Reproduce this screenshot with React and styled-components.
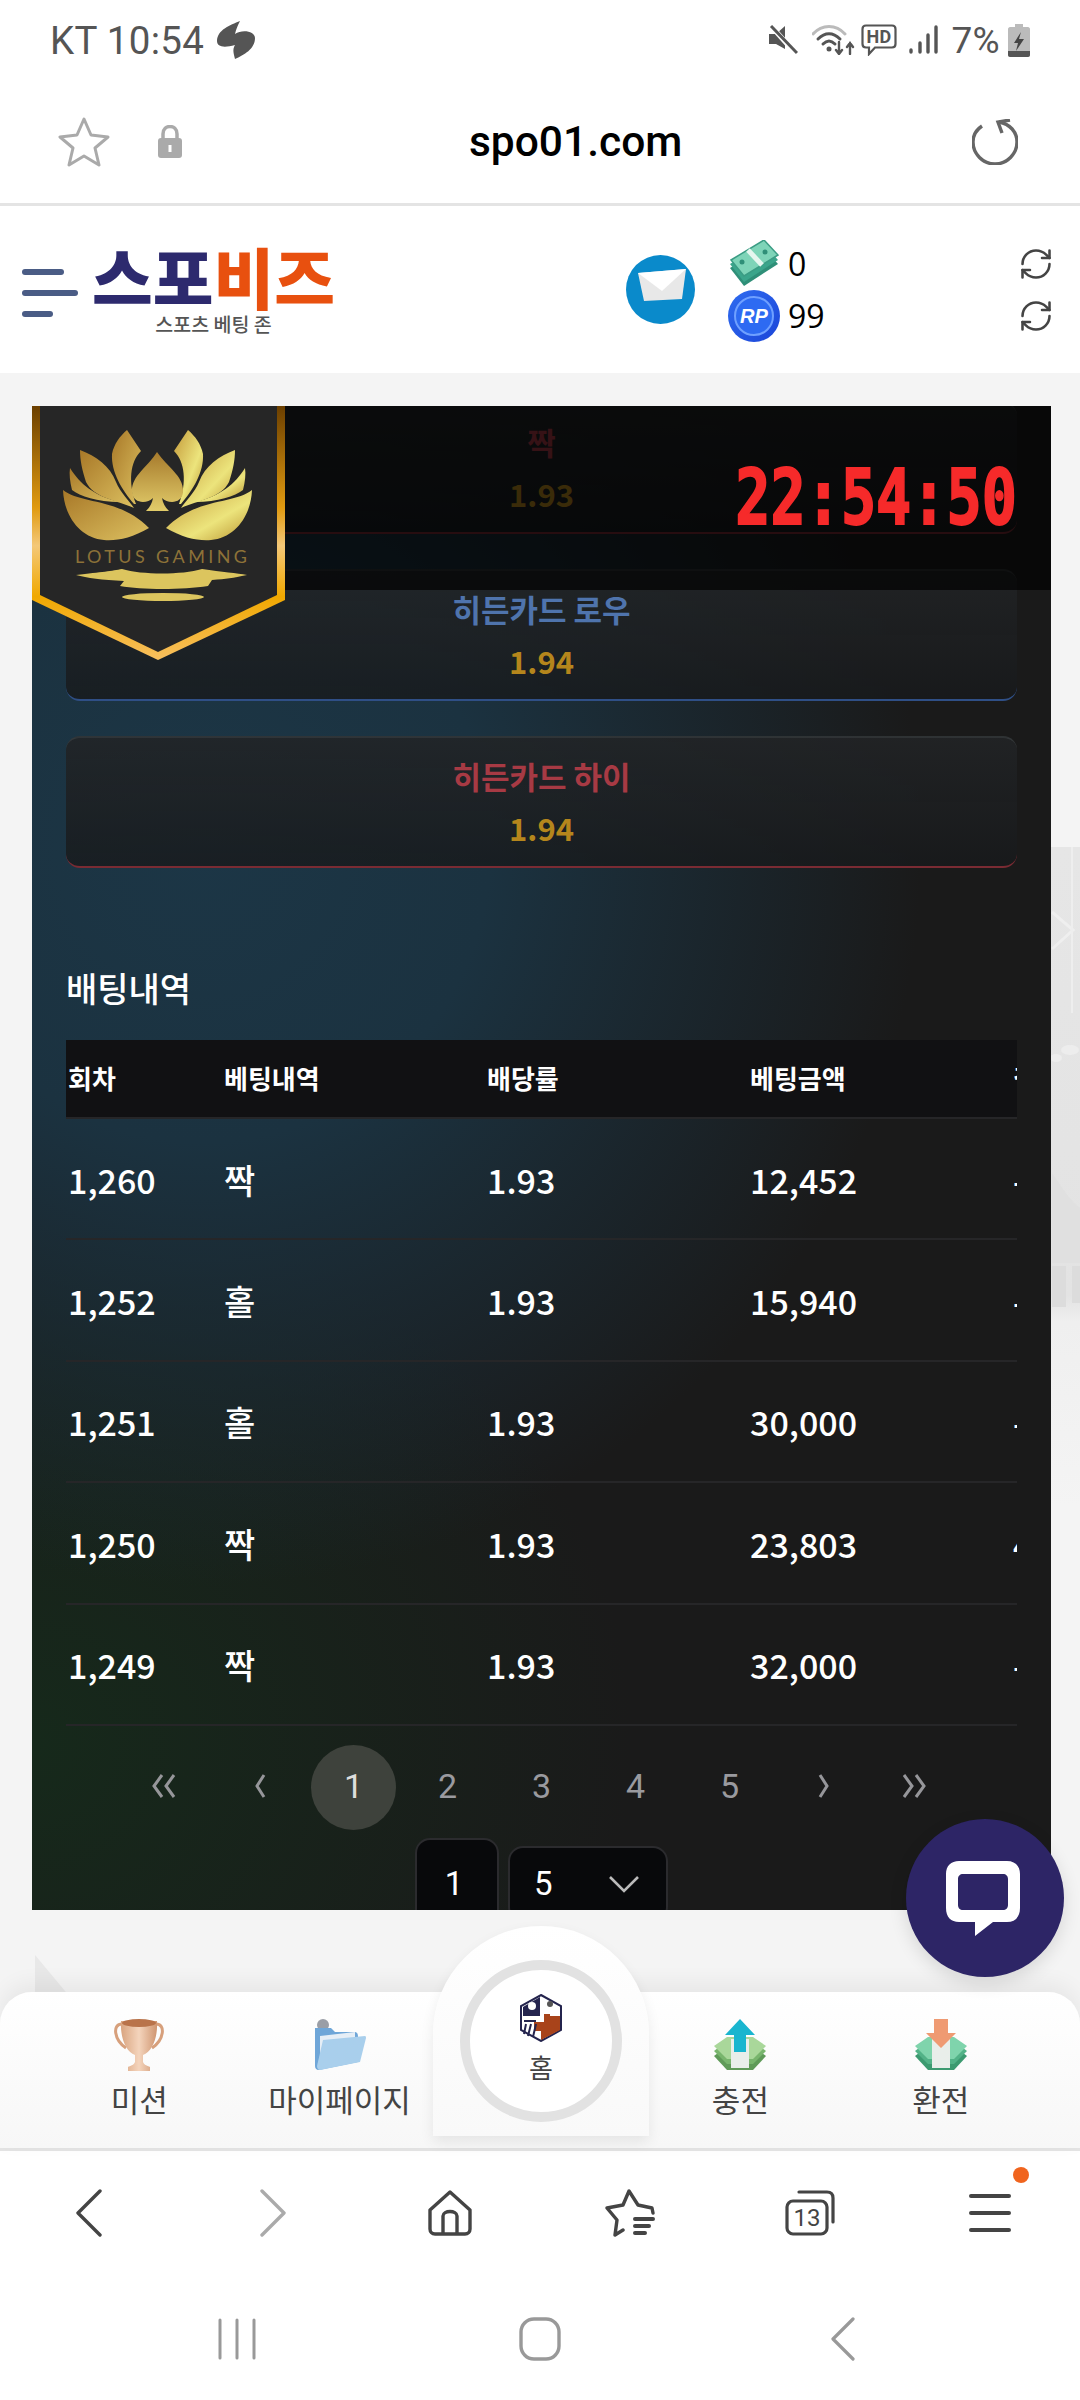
import React from 'react';
import styled, {createGlobalStyle} from 'styled-components';
import {RefreshCw} from 'lucide-react';

const KR = `"Noto Sans CJK KR", "Noto Sans", sans-serif`;

const GlobalStyle = createGlobalStyle`
  html, body {
    margin: 0;
    padding: 0;
    background: #f4f4f4;
    font-family: ${KR};
  }
  * { box-sizing: border-box; }
`;

const Page = styled.div`
  position: relative;
  width: 1080px;
  height: 2400px;
  overflow: hidden;
  display: flex;
  flex-direction: column;
  background: #f4f4f4;
`;

/* phone status bar */
const StatusBar = styled.div`
  height: 80px;
  background: #fff;
  display: flex;
  align-items: center;
  padding: 0 50px;
  color: #555;
  font-family: Roboto, sans-serif;
  font-size: 38.5px;
  letter-spacing: 0.3px;
`;
const StatusRight = styled.div`
  margin-left: auto;
  display: flex;
  align-items: center;
  font-size: 37px;
`;
const Gap = styled.span`
  display: inline-block;
  width: ${p => p.$w}px;
`;

/* url bar */
const UrlBar = styled.div`
  height: 126px;
  background: #fff;
  border-bottom: 3px solid #e4e4e4;
  display: flex;
  align-items: center;
  padding: 0 62px 0 58px;
`;
const UrlText = styled.div`
  margin-left: 286px;
  font-family: Roboto, sans-serif;
  font-size: 42.5px;
  font-weight: 500;
  color: #000;
`;
const Reload = styled.svg`
  margin-left: auto;
`;

/* site header */
const Header = styled.header`
  height: 167px;
  background: #fff;
  display: flex;
  align-items: center;
  padding: 0 26px 0 22px;
`;
const Burger = styled.div`
  width: 56px;
  display: flex;
  flex-direction: column;
  gap: 15px;
  margin-top: 6px;
`;
const BurgerLine = styled.span`
  display: block;
  height: 6px;
  border-radius: 3px;
  background: #4a5c85;
  width: ${p => p.$w}px;
`;
const Logo = styled.div`
  width: 243px;
  margin-left: 14px;
  display: flex;
  flex-direction: column;
  align-items: center;
  margin-top: -3px;
`;
const LogoMain = styled.div`
  font-size: 66px;
  line-height: 68px;
  font-weight: 900;
  white-space: nowrap;
  color: #2d2a6e;
`;
const LogoAccent = styled.span`
  color: #e8500f;
`;
const LogoSub = styled.div`
  font-size: 19.5px;
  line-height: 24px;
  font-weight: 500;
  color: #555;
  margin-top: 3px;
`;
const MailIcon = styled.svg`
  margin-left: 291px;
  flex: none;
`;
const Wallet = styled.div`
  margin-left: 33px;
  display: flex;
  flex-direction: column;
  gap: 2px;
`;
const WalletRow = styled.div`
  height: 50px;
  display: flex;
  align-items: center;
  gap: 8px;
  font-size: 32px;
  color: #000;
  font-family: "Open Sans", sans-serif;
`;
const RefreshStack = styled.div`
  margin-left: auto;
  display: flex;
  flex-direction: column;
  gap: 16px;
  color: #444;
`;

/* main area */
const Main = styled.main`
  position: relative;
  height: 1619px;
  padding: 33px 29px 0 32px;
`;
const Backdrop = styled.svg`
  position: absolute;
  left: 0;
  top: 0;
`;
const Panel = styled.section`
  position: relative;
  height: 1504px;
  overflow: hidden;
  color: #fff;
  background:
    radial-gradient(ellipse 720px 740px at 170px 440px, #1c3646 0%, #1b3240 40%, rgba(27, 50, 64, 0) 100%),
    radial-gradient(ellipse 600px 560px at 0 1340px, #16291b 0%, rgba(22, 41, 27, 0) 100%),
    #1a1a1a;
`;
const Overlay = styled.div`
  position: absolute;
  left: 0;
  top: 0;
  right: 0;
  height: 184px;
  background: rgba(0, 0, 0, 0.68);
  display: flex;
  justify-content: flex-end;
  align-items: center;
  padding: 0 34px 0 0;
`;
const Clock = styled.div`
  font-family: "DejaVu Sans Mono", monospace;
  font-weight: 700;
  font-size: 58.5px;
  line-height: 60px;
  color: #f62a2a;
  -webkit-text-stroke: 1.5px #f62a2a;
  transform: scaleY(1.3);
  margin-top: -1px;
`;
const Shield = styled.svg`
  position: absolute;
  left: 0;
  top: 0;
`;
const Content = styled.div`
  padding: 0 34px;
  margin-top: -4px;
`;
const Cards = styled.div`
  width: 951px;
  display: flex;
  flex-direction: column;
  gap: 35px;
`;
const Card = styled.div`
  height: 132px;
  border-radius: 14px;
  border-top: 2px solid rgba(70, 76, 78, 0.5);
  border-bottom: 2px solid ${p => p.$line};
  background: linear-gradient(180deg, rgba(34, 36, 38, 0.88) 0%, rgba(24, 26, 28, 0.82) 100%);
  display: flex;
  flex-direction: column;
  align-items: center;
  padding-top: 15px;
  font-weight: 700;
`;
const CardLabel = styled.div`
  font-size: 31px;
  line-height: 46px;
  color: ${p => p.$color};
`;
const CardOdds = styled.div`
  font-size: 31px;
  line-height: 44px;
  margin-top: 7px;
  color: #b5861c;
`;
const SectionTitle = styled.h2`
  margin: 98px 0 30px;
  font-size: 34px;
  line-height: 44px;
  font-weight: 500;
  color: #fff;
`;
const TableWrap = styled.div`
  width: 951px;
  overflow: hidden;
`;
const Row = styled.div`
  width: 1100px;
  display: grid;
  grid-template-columns: 156px 263px 263px 263px 155px;
  align-items: center;
  padding: 1px 0 0 2px;
  height: 121.4px;
  border-bottom: 2px solid #262628;
  font-size: 34px;
  font-weight: 500;
  white-space: nowrap;
`;
const HeadRow = styled(Row)`
  height: 79px;
  background: #111113;
  font-size: 26px;
  font-weight: 700;
  padding: 0 0 2px 2px;
`;
const Pagination = styled.nav`
  margin: 19px -34px 0;
  display: flex;
  justify-content: center;
`;
const PageItem = styled.div`
  width: 94px;
  height: 85px;
  display: flex;
  align-items: center;
  justify-content: center;
  color: #9a9a9f;
  font-family: Roboto, sans-serif;
  font-size: 34px;
  padding-bottom: 2px;
`;
const ActivePage = styled.span`
  width: 85px;
  height: 85px;
  margin-bottom: -2px;
  padding-bottom: 2px;
  border-radius: 50%;
  display: flex;
  align-items: center;
  justify-content: center;
  background: #3e423c;
  color: #ddd;
`;
const PageSize = styled.div`
  margin: 8px -34px 0;
  display: flex;
  justify-content: center;
  align-items: flex-start;
  gap: 9px;
`;
const SizeBox = styled.div`
  height: ${p => p.$h}px;
  width: ${p => p.$w}px;
  margin-top: ${p => p.$top}px;
  background: #08090b;
  border: 2px solid #2b2b2e;
  border-radius: 15px;
  display: flex;
  align-items: center;
  justify-content: ${p => (p.$split ? 'space-between' : 'center')};
  padding: ${p => (p.$split ? '0 26px 0 24px' : '0 6px 0 0')};
  font-family: Roboto, sans-serif;
  font-size: 33px;
  color: #fff;
`;

/* floating chat */
const ChatFab = styled.div`
  position: absolute;
  left: 906px;
  top: 1819px;
  width: 158px;
  height: 158px;
  border-radius: 50%;
  background: #2d2566;
  box-shadow: 0 6px 18px rgba(0, 0, 0, 0.12);
  display: flex;
  align-items: center;
  justify-content: center;
  padding-right: 5px;
  z-index: 5;
`;

/* site bottom nav */
const BottomNav = styled.nav`
  position: relative;
  height: 156px;
  border-radius: 32px 32px 0 0;
  background: linear-gradient(180deg, #fff 0%, #f7f7f7 100%);
  box-shadow: 0 -8px 22px rgba(0, 0, 0, 0.06);
  display: grid;
  grid-template-columns: repeat(5, 1fr);
  padding: 0 39px;
  z-index: 2;
`;
const NavItem = styled.div`
  display: flex;
  flex-direction: column;
  align-items: center;
  padding-top: 26px;
  color: #444;
  font-size: 31px;
  line-height: 44px;
  white-space: nowrap;
`;
const NavIcon = styled.svg`
  display: block;
  margin-bottom: 5px;
`;
const Bump = styled.div`
  position: absolute;
  left: 433px;
  top: -66px;
  width: 216px;
  height: 210px;
  border-radius: 108px 108px 0 0;
  background: linear-gradient(180deg, #fff 0%, #f9f9f9 100%);
  box-shadow: 0 6px 14px rgba(0, 0, 0, 0.08);
  display: flex;
  justify-content: center;
  padding-top: 34px;
`;
const Ring = styled.div`
  width: 162px;
  height: 162px;
  border-radius: 50%;
  border: 10px solid #e2e2e2;
  background: #fff;
  display: flex;
  flex-direction: column;
  align-items: center;
  padding-top: 24px;
  gap: 7px;
  font-size: 26px;
  line-height: 36px;
  color: #444;
`;

/* browser toolbar + system nav */
const Toolbar = styled.div`
  height: 126px;
  background: #fff;
  border-top: 3px solid #e4e4e4;
  display: grid;
  grid-template-columns: repeat(6, 1fr);
  align-items: center;
  justify-items: center;
  z-index: 1;
  position: relative;
`;
const ToolIcon = styled.svg`
  margin-left: ${p => p.$nudge || 0}px;
`;
const MenuWrap = styled.div`
  position: relative;
  width: 42px;
  display: flex;
  flex-direction: column;
  gap: 13px;
`;
const MenuBar = styled.span`
  display: block;
  height: 4px;
  border-radius: 2px;
  background: #444;
`;
const MenuDot = styled.span`
  position: absolute;
  left: 44px;
  top: -27px;
  width: 16px;
  height: 16px;
  border-radius: 50%;
  background: #f0641e;
`;
const SystemNav = styled.div`
  flex: 1;
  background: #fff;
  display: grid;
  grid-template-columns: repeat(3, 303px);
  justify-content: center;
  justify-items: center;
  align-items: center;
  padding: 4px 0 0;
`;

const columns = ['회차', '베팅내역', '배당률', '베팅금액', '결과'];
const bets = [
  ['1,260', '짝', '1.93', '12,452', '-'],
  ['1,252', '홀', '1.93', '15,940', '-'],
  ['1,251', '홀', '1.93', '30,000', '-'],
  ['1,250', '짝', '1.93', '23,803', '4'],
  ['1,249', '짝', '1.93', '32,000', '-'],
];
const cards = [
  {label: '짝', odds: '1.93', color: '#a73a44', line: '#7a2b33'},
  {label: '히든카드 로우', odds: '1.94', color: '#4f74ad', line: '#2f4f86'},
  {label: '히든카드 하이', odds: '1.94', color: '#a73a44', line: '#7a2b33'},
];

const Chevron = ({dir = 'left', double}) => {
  const flip = dir === 'right' ? `translate(${double ? 24 : 30},0) scale(-1,1)` : undefined;
  return (
    <svg width="30" height="24" viewBox="0 0 30 24" fill="none" stroke="#96969a" strokeWidth="3">
      <g transform={flip}>
        <path d={double ? 'M11 1 L3 12 L11 23' : 'M19 1 L12 12 L19 23'} />
        {double && <path d="M23 1 L15 12 L23 23" />}
      </g>
    </svg>
  );
};

const LotusHalf = ({fill}) => (
  <g fill={fill}>
    <path d="M31 84 C48 98 88 92 117 122 C100 132 85 135 72 134 C48 132 32 110 31 84Z" />
    <path d="M38 62 C48 78 62 90 88 96 C65 96 48 90 40 84 C38 76 37 68 38 62Z" />
    <path d="M48 44 C64 50 78 60 84 76 C88 86 98 96 102 102 C84 94 62 92 54 76 C50 64 48 54 48 44Z" />
    <path d="M95 24 L109 45 C98 56 96 76 104 98 L102 98 C90 84 79 66 80 48 C82 38 88 30 95 24Z" />
  </g>
);

const LotusShield = () => (
  <Shield width="253" height="254" viewBox="0 0 253 254">
    <defs>
      <linearGradient id="rim" x1="0" y1="0" x2="0" y2="1">
        <stop offset="0" stopColor="#6b3f00" />
        <stop offset="0.4" stopColor="#e09a10" />
        <stop offset="0.55" stopColor="#f4c878" />
        <stop offset="0.75" stopColor="#f0a800" />
        <stop offset="1" stopColor="#f8c060" />
      </linearGradient>
      <linearGradient id="goldL" x1="0" y1="0" x2="1" y2="1">
        <stop offset="0" stopColor="#a87828" />
        <stop offset="1" stopColor="#dcc060" />
      </linearGradient>
      <linearGradient id="goldR" x1="1" y1="0" x2="0" y2="1">
        <stop offset="0" stopColor="#c49a3a" />
        <stop offset="0.6" stopColor="#ece47c" />
        <stop offset="1" stopColor="#b8922e" />
      </linearGradient>
      <linearGradient id="spade" x1="0" y1="0" x2="0" y2="1">
        <stop offset="0" stopColor="#a67a2c" />
        <stop offset="1" stopColor="#e2cc6a" />
      </linearGradient>
    </defs>
    <path d="M0 0H253V194L126 254L0 194Z" fill="url(#rim)" />
    <path d="M8 0H245V189L126 246L8 189Z" fill="#262626" />
    <LotusHalf fill="url(#goldL)" />
    <g transform="translate(251,0) scale(-1,1)">
      <LotusHalf fill="url(#goldR)" />
    </g>
    <path
      d="M125 46 C136 62 152 70 151 86 C150 98 136 98 130 92 C131 98 134 102 137 105 H114 C117 102 120 98 121 92 C115 98 101 98 100 86 C99 70 115 62 125 46Z"
      fill="url(#spade)"
    />
    <text x="43" y="157" fontFamily="Lato, sans-serif" fontSize="18" fill="#8d7238" textLength="172">
      LOTUS GAMING
    </text>
    <path
      d="M44 169 C70 166 80 165 90 163 C110 169 150 169 170 163 C190 166 205 167 215 169 C200 172 195 173 180 174 L176 180 C150 184 110 184 88 180 L92 175 C70 174 55 172 44 169Z"
      fill="#dcc55e"
    />
    <ellipse cx="131" cy="191" rx="41" ry="4" fill="#dcc55e" />
  </Shield>
);

const CashIcon = () => (
  <svg width="52" height="48" viewBox="0 0 52 48">
    <path d="M2 28 L36 8 L50 24 L16 46 Z" fill="#2f8f78" />
    <path d="M2 24 L36 4 L50 20 L16 42 Z" fill="#3ba58b" />
    <path d="M3 20 L36 0 L50 15 L16 36 Z" fill="#7ed4b8" stroke="#3b9c84" strokeWidth="1.5" />
    <path d="M20 10 L34 25" stroke="#e6f6ef" strokeWidth="5" />
    <circle cx="14" cy="22" r="2.5" fill="#2f8f78" />
    <circle cx="37" cy="12" r="2.5" fill="#2f8f78" />
  </svg>
);

const RpIcon = () => (
  <svg width="52" height="52" viewBox="0 0 52 52">
    <defs>
      <linearGradient id="rp" x1="0" y1="0" x2="1" y2="1">
        <stop offset="0" stopColor="#2f6cf0" />
        <stop offset="1" stopColor="#1b45d8" />
      </linearGradient>
    </defs>
    <circle cx="26" cy="26" r="26" fill="url(#rp)" />
    <circle cx="26" cy="26" r="19" fill="#2d6af2" stroke="#6fa0ff" strokeWidth="2" />
    <text x="26" y="33" textAnchor="middle" fontFamily="Liberation Sans, sans-serif" fontSize="20" fontWeight="700" fontStyle="italic" fill="#fff">
      RP
    </text>
  </svg>
);

const TrophyIcon = () => (
  <NavIcon width="54" height="54" viewBox="0 0 54 54">
    <defs>
      <linearGradient id="cu" x1="0" y1="0" x2="1" y2="0">
        <stop offset="0" stopColor="#d9a47f" />
        <stop offset="0.5" stopColor="#f4d4bc" />
        <stop offset="1" stopColor="#cf9570" />
      </linearGradient>
    </defs>
    <path d="M10 6 C0 6 2 22 14 30 M44 6 C54 6 52 22 40 30" fill="none" stroke="#d7a07c" strokeWidth="3" />
    <path d="M9 3 H45 C46 20 40 34 31 37 V44 C32 47 36 48 38 49 V53 H16 V49 C18 48 22 47 23 44 V37 C14 34 8 20 9 3Z" fill="url(#cu)" />
    <ellipse cx="27" cy="5" rx="17" ry="4" fill="#b9734a" />
  </NavIcon>
);

const FolderIcon = () => (
  <NavIcon width="54" height="54" viewBox="0 0 54 54">
    <circle cx="10" cy="7" r="6" fill="#9a9ea6" />
    <path d="M2 10 H18 L22 14 H42 C45 14 45 18 45 18 V44 L6 52 C3 52 2 50 2 48Z" fill="#6fa6d8" />
    <path d="M7 18 L42 14 V30 L7 46Z" fill="#e6eef6" />
    <path d="M10 22 L52 18 C53 18 53 20 53 20 L47 44 L7 52 C5 52 4 50 4 48Z" fill="#a9cfec" />
  </NavIcon>
);

const StackShape = ({y = 28, top, mid, low}) => (
  <g>
    <path d={`M1 ${y + 4} L14 ${y - 6} H40 L53 ${y + 4} L40 ${y + 18} H14 Z`} fill={low} />
    <path d={`M1 ${y - 1} L14 ${y - 11} H40 L53 ${y - 1} L40 ${y + 12} H14 Z`} fill={mid} />
    <path d={`M1 ${y - 6} L14 ${y - 15} H40 L53 ${y - 6} L40 ${y + 7} H14 Z`} fill={top} />
    <path d={`M18 ${y - 13} H36 V${y + 16} H18 Z`} fill="#e9eeea" />
  </g>
);

const ChargeIcon = () => (
  <NavIcon width="54" height="54" viewBox="0 0 54 54">
    <StackShape y={34} top="#a9d79a" mid="#78b56d" low="#5f9a58" />
    <path d="M27 1 L42 17 H33 V34 H21 V17 H12 Z" fill="#19b5cf" />
  </NavIcon>
);

const ExchangeIcon = () => (
  <NavIcon width="54" height="54" viewBox="0 0 54 54">
    <StackShape y={34} top="#7fd4ac" mid="#52b287" low="#3c9a70" />
    <path d="M20 1 H34 V15 H42 L27 30 L12 15 H20 Z" fill="#ef9a72" />
  </NavIcon>
);

const HexIcon = () => (
  <svg width="42" height="48" viewBox="0 0 42 48" style={{display: 'block', flex: 'none'}}>
    <path d="M21 1 L41 12 V36 L21 47 L1 36 V12 Z" fill="#fff" stroke="#24244e" strokeWidth="2" />
    <path d="M3 13 L20 3 V22 H3 Z" fill="#24244e" />
    <circle cx="12" cy="12" r="4" fill="#fff" />
    <path d="M40 22 V36 L21 46 V37 H14 V28 H24 V20 H30 V22Z" fill="#a8431a" />
    <circle cx="30" cy="10" r="3" fill="#555" />
    <path d="M4 27 H16 M6 30 L4 40 M11 30 L8 42 M16 30 L13 43" stroke="#24244e" strokeWidth="2" />
  </svg>
);

export default function App() {
  return (
    <Page>
      <GlobalStyle />
      <StatusBar>
        KT 10:54
        <Gap $w={12} />
        <svg width="40" height="38" viewBox="0 0 40 38">
          <path d="M24 0 C14 4 1 9 1 20 C1 26 8 27 19 24 C16 29 18 33 19 38 C28 34 39 28 39 17 C39 10 26 8 19 13 C20 8 22 4 24 0Z" fill="#555" />
        </svg>
        <StatusRight>
          <svg width="30" height="30" viewBox="0 0 30 30">
            <path d="M1 9 H8 L17 1 V24 L8 19 H1Z" fill="#555" />
            <path d="M4 2 L28 29" stroke="#fff" strokeWidth="5" />
            <path d="M3 1 L29 28" stroke="#555" strokeWidth="3" />
          </svg>
          <Gap $w={14} />
          <svg width="43" height="30" viewBox="0 0 43 30" fill="none" strokeLinecap="round">
            <path d="M1 9 C10 -1 24 -1 33 9" stroke="#bbb" strokeWidth="3" />
            <path d="M6 14 C13 7 21 7 28 14" stroke="#555" strokeWidth="3" />
            <path d="M11 19 C15 15 19 15 23 19" stroke="#555" strokeWidth="3" />
            <circle cx="17" cy="24" r="2.5" fill="#555" />
            <path d="M27 17 V28 M24 25 L27 29 L30 25 M38 29 V18 M35 22 L38 18 L41 22" stroke="#555" strokeWidth="2.4" />
          </svg>
          <Gap $w={6} />
          <svg width="36" height="32" viewBox="0 0 36 32">
            <path d="M5 1.5 H31 C33 1.5 34.5 3 34.5 5 V20 C34.5 22 33 23.5 31 23.5 H14 L8 30 V23.5 H5 C3 23.5 1.5 22 1.5 20 V5 C1.5 3 3 1.5 5 1.5Z" fill="none" stroke="#555" strokeWidth="2.2" />
            <text x="18" y="19" textAnchor="middle" fontFamily="Roboto, sans-serif" fontWeight="700" fontSize="18" fill="#555">HD</text>
          </svg>
          <Gap $w={11} />
          <svg width="30" height="30" viewBox="0 0 30 30" stroke="#555" strokeWidth="3.4" strokeLinecap="round">
            <path d="M3 27 V25 M12 27 V18 M20 27 V10 M28 27 V2" />
          </svg>
          <Gap $w={14} />
          7%
          <Gap $w={8} />
          <svg width="22" height="33" viewBox="0 0 22 33">
            <path d="M7 0 H15 V3 H20 C21 3 22 4 22 5 V31 C22 32 21 33 20 33 H2 C1 33 0 32 0 31 V5 C0 4 1 3 2 3 H7Z" fill="#bbb" />
            <path d="M0 27 H22 V31 C22 32 21 33 20 33 H2 C1 33 0 32 0 31Z" fill="#555" />
            <path d="M13 8 L6 19 H10 L8 27 L16 15 H11Z" fill="#444" />
          </svg>
        </StatusRight>
      </StatusBar>

      <UrlBar>
        <svg width="52" height="50" viewBox="0 0 52 50" fill="none" stroke="#aaa" strokeWidth="3" strokeLinejoin="round">
          <path d="M26 2 L33 18 L50 20 L37 31 L41 48 L26 39 L11 48 L15 31 L2 20 L19 18Z" />
        </svg>
        <Gap $w={47} />
        <svg width="26" height="34" viewBox="0 0 26 34">
          <path d="M6 14 V9 C6 -1 20 -1 20 9 V14" fill="none" stroke="#aaa" strokeWidth="3.5" />
          <rect x="1" y="13" width="24" height="20" rx="3" fill="#aaa" />
          <rect x="11.5" y="20" width="3" height="7" fill="#fff" />
        </svg>
        <UrlText>spo01.com</UrlText>
        <Reload width="46" height="46" viewBox="0 0 46 46" fill="none" stroke="#666" strokeWidth="3.4">
          <path d="M10 7 C4 11 1 17 1 23 C1 35 11 45 23 45 C35 45 45 35 45 23 C45 13 38 5 27 3" />
          <path d="M38 1 L26 3 L30 14" />
        </Reload>
      </UrlBar>

      <Header>
        <Burger>
          <BurgerLine $w={42} />
          <BurgerLine $w={56} />
          <BurgerLine $w={31} />
        </Burger>
        <Logo>
          <LogoMain>
            스포<LogoAccent>비즈</LogoAccent>
          </LogoMain>
          <LogoSub>스포츠 베팅 존</LogoSub>
        </Logo>
        <MailIcon width="69" height="69" viewBox="0 0 69 69">
          <circle cx="34.5" cy="34.5" r="34.5" fill="#0a8acb" />
          <path d="M12 18 L60 14 L56 44 L18 46Z" fill="#e8e8e8" />
          <path d="M12 18 L60 14 L36 36Z" fill="#fff" />
        </MailIcon>
        <Wallet>
          <WalletRow>
            <CashIcon />0
          </WalletRow>
          <WalletRow>
            <RpIcon />99
          </WalletRow>
        </Wallet>
        <RefreshStack>
          <RefreshCw size={36} strokeWidth={1.7} />
          <RefreshCw size={36} strokeWidth={1.7} />
        </RefreshStack>
      </Header>

      <Main>
        <Backdrop width="1080" height="1619" viewBox="0 0 1080 1619">
          <defs>
            <linearGradient id="strip" x1="0" y1="0" x2="0" y2="1">
              <stop offset="0" stopColor="#e6e6e6" />
              <stop offset="0.68" stopColor="#e3e3e3" />
              <stop offset="0.72" stopColor="#efefef" />
              <stop offset="1" stopColor="#f4f4f4" />
            </linearGradient>
          </defs>
          <rect x="1040" y="474" width="40" height="660" fill="url(#strip)" />
          <path d="M1052 539 L1073 557 L1052 576" fill="none" stroke="#efefef" strokeWidth="3" />
          <path d="M1072 474 V640" stroke="#eeeeee" strokeWidth="2" />
          <ellipse cx="1070" cy="677" rx="9" ry="5" fill="#ededed" />
          <ellipse cx="1056" cy="685" rx="6" ry="4" fill="#ededed" />
          <path d="M1052 800 C1062 815 1072 830 1080 835 V890 H1052Z" fill="#e0e0e0" />
          <path d="M1052 893 H1066 V934 H1052Z M1072 893 H1080 V930 H1072Z" fill="#dcdcdc" />
          <path d="M35 1582 L75 1630 H35Z" fill="#e8e8e8" />
        </Backdrop>
        <Panel>
          <Content>
            <Cards>
              {cards.map(card => (
                <Card key={card.label} $line={card.line}>
                  <CardLabel $color={card.color}>{card.label}</CardLabel>
                  <CardOdds>{card.odds}</CardOdds>
                </Card>
              ))}
            </Cards>
            <SectionTitle>배팅내역</SectionTitle>
            <TableWrap>
              <HeadRow>
                {columns.map(col => (
                  <div key={col}>{col}</div>
                ))}
              </HeadRow>
              {bets.map(bet => (
                <Row key={bet[0]}>
                  {bet.map((cell, i) => (
                    <div key={i}>{cell}</div>
                  ))}
                </Row>
              ))}
            </TableWrap>
            <Pagination>
              <PageItem><Chevron double /></PageItem>
              <PageItem><Chevron /></PageItem>
              <PageItem><ActivePage>1</ActivePage></PageItem>
              {[2, 3, 4, 5].map(n => (
                <PageItem key={n}>{n}</PageItem>
              ))}
              <PageItem><Chevron dir="right" /></PageItem>
              <PageItem><Chevron dir="right" double /></PageItem>
            </Pagination>
            <PageSize>
              <SizeBox $w={84} $h={92} $top={0}>1</SizeBox>
              <SizeBox $w={160} $h={76} $top={8} $split>
                5
                <svg width="32" height="18" viewBox="0 0 32 18" fill="none" stroke="#bbb" strokeWidth="2.6">
                  <path d="M2 2 L16 16 L30 2" />
                </svg>
              </SizeBox>
            </PageSize>
          </Content>
          <Overlay>
            <Clock>22:54:50</Clock>
          </Overlay>
          <LotusShield />
        </Panel>
      </Main>

      <ChatFab>
        <svg width="76" height="76" viewBox="0 0 76 76">
          <path
            fillRule="evenodd"
            d="M14 1 H62 C70 1 75 6 75 14 V48 C75 57 70 62 62 62 H48 L30 76 V62 H14 C6 62 1 57 1 48 V14 C1 6 6 1 14 1Z M18 14 C15 14 13 16 13 19 V45 C13 48 15 50 18 50 H58 C61 50 63 48 63 45 V19 C63 16 61 14 58 14Z"
            fill="#fff"
          />
        </svg>
      </ChatFab>

      <BottomNav>
        <NavItem><TrophyIcon />미션</NavItem>
        <NavItem><FolderIcon />마이페이지</NavItem>
        <div />
        <NavItem><ChargeIcon />충전</NavItem>
        <NavItem><ExchangeIcon />환전</NavItem>
        <Bump>
          <Ring>
            <HexIcon />
            <div>홈</div>
          </Ring>
        </Bump>
      </BottomNav>

      <Toolbar>
        <ToolIcon $nudge={-3} width="26" height="48" viewBox="0 0 26 48" fill="none" stroke="#444" strokeWidth="3.4" strokeLinecap="round" strokeLinejoin="round">
          <path d="M24 2 L2 24 L24 46" />
        </ToolIcon>
        <ToolIcon $nudge={5} width="26" height="48" viewBox="0 0 26 48" fill="none" stroke="#aaa" strokeWidth="3.4" strokeLinecap="round" strokeLinejoin="round">
          <path d="M2 2 L24 24 L2 46" />
        </ToolIcon>
        <svg width="46" height="46" viewBox="0 0 46 46" fill="none" stroke="#444" strokeWidth="3.4" strokeLinejoin="round">
          <path d="M23 2 L43 20 V39 C43 42 41 44 38 44 H8 C5 44 3 42 3 39 V20Z" />
          <path d="M16 44 V26 C16 20 30 20 30 26 V44" />
        </svg>
        <svg width="50" height="48" viewBox="0 0 50 48" fill="none" stroke="#444" strokeWidth="3.4" strokeLinecap="round" strokeLinejoin="round">
          <path d="M48 24 L47 19 L33 16 L24 2 L18 16 L2 19 L12 31 L10 46 L18 41" />
          <path d="M30 30 H48 M30 37 H44 M30 44 H40" strokeWidth="4" />
        </svg>
        <svg width="50" height="46" viewBox="0 0 50 46" fill="none" stroke="#444" strokeWidth="3.2" strokeLinejoin="round">
          <path d="M14 2 H42 C46 2 48 4 48 8 V32" strokeLinecap="round" />
          <rect x="2" y="11" width="40" height="33" rx="6" />
          <text x="22" y="36" textAnchor="middle" fontFamily="Roboto, sans-serif" fontSize="24" fill="#444" stroke="none">13</text>
        </svg>
        <MenuWrap>
          <MenuBar />
          <MenuBar />
          <MenuBar />
          <MenuDot />
        </MenuWrap>
      </Toolbar>

      <SystemNav>
        <svg width="38" height="42" viewBox="0 0 38 42" stroke="#999" strokeWidth="3" strokeLinecap="round">
          <path d="M2 2 V40 M19 2 V40 M36 2 V40" />
        </svg>
        <svg width="42" height="44" viewBox="0 0 42 44" fill="none" stroke="#999" strokeWidth="3.4">
          <rect x="2" y="2" width="38" height="40" rx="13" />
        </svg>
        <svg width="24" height="44" viewBox="0 0 24 44" fill="none" stroke="#999" strokeWidth="3.2" strokeLinecap="round" strokeLinejoin="round">
          <path d="M22 2 L2 22 L22 42" />
        </svg>
      </SystemNav>
    </Page>
  );
}
